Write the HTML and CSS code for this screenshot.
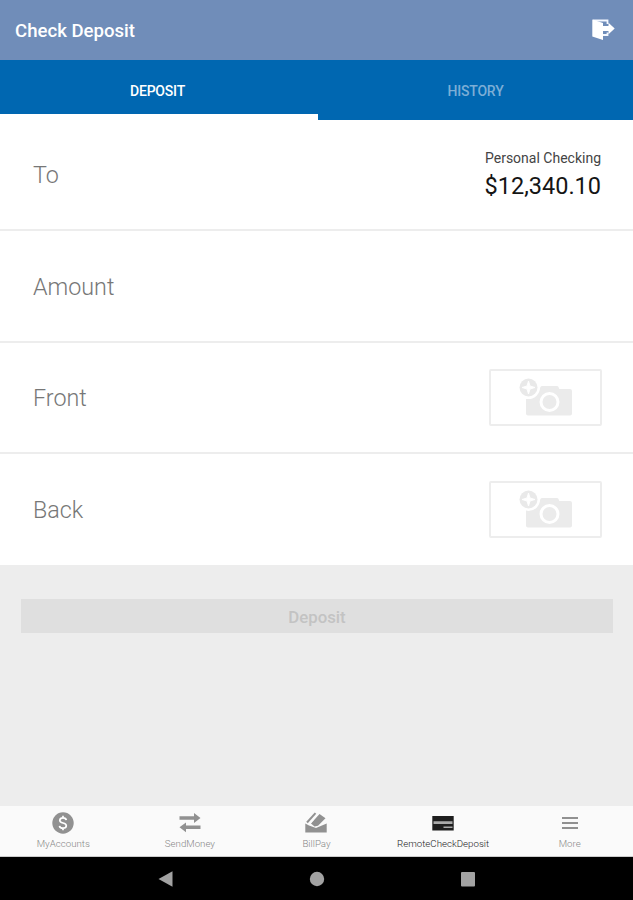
FILE: index.html
```html
<!DOCTYPE html>
<html lang="en">
<head>
<meta charset="utf-8">
<title>Check Deposit</title>
<link rel="stylesheet" href="styles.css">
</head>
<body>
<svg width="0" height="0" class="defs">
  <symbol id="camera" viewBox="0 0 54 40">
    <path fill="#ebebeb" d="M8 14h11l2.500-5q.5-1 1.500-1h15q1 0 1.500 1l.8 2h10.700q2 0 2 2v22.500q0 2-2 2H9q-2 0-2-2V14z"/>
    <circle cx="9.500" cy="9.500" r="11.500" fill="#fff"/>
    <circle cx="9.500" cy="9.500" r="9" fill="#e9e9e9"/>
    <path d="M9.500 3l1.500 5 5 1.500-5 1.500-1.500 5-1.500-5-5-1.500 5-1.500z" fill="#fff" stroke="#fff"/>
    <circle cx="30.500" cy="24" r="8.500" fill="#ebebeb" stroke="#fff" stroke-width="3"/>
  </symbol>
</svg>
<header class="appbar">
  <h1>Check Deposit</h1>
  <svg class="exit" width="24" height="24" viewBox="0 0 24 24">
    <path d="M1 2.500h14.500V6M15.500 14.500V17H10" fill="none" stroke="#f4f8ff" stroke-width="1.800"/>
    <path fill="#fff" d="M.3 1.600L11 5v17L.3 18.500z"/>
    <path fill="#fff" d="M11 8h5.500V4.800l6.200 5.700-6.200 5.700V13H11z"/>
  </svg>
</header>
<nav class="tabs">
  <div class="tab active">DEPOSIT</div>
  <div class="tab">HISTORY</div>
</nav>
<main>
  <section class="row">
    <span class="label">To</span>
    <div class="account"><span class="name">Personal Checking</span><span class="balance">$12,340.10</span></div>
  </section>
  <section class="row"><span class="label">Amount</span></section>
  <section class="row"><span class="label">Front</span><div class="photo"><svg width="54" height="40"><use href="#camera"/></svg></div></section>
  <section class="row"><span class="label">Back</span><div class="photo"><svg width="54" height="40"><use href="#camera"/></svg></div></section>
  <button class="submit" disabled>Deposit</button>
</main>
<nav class="bottom">
  <div class="item">
    <svg width="24" height="24" viewBox="0 0 24 24"><circle cx="12" cy="12" r="10.700" fill="#919191"/><path d="M15.300 9.200Q15 6.800 12 6.800T8.800 9.200Q8.800 11.200 12 12T15.300 14.800Q15.200 17.200 12 17.200T8.500 14.800M12 4.800v2M12 17v2.300" fill="none" stroke="#fff" stroke-width="1.700"/></svg>
    <span>MyAccounts</span>
  </div>
  <div class="item">
    <svg width="24" height="24" viewBox="0 0 24 24"><path fill="#919191" d="M1.500 5.200H16V2l6.500 5-6.500 5V8.800H1.500zM22.500 18H8v3.200L1.500 16.300 8 11.500v3h14.500z"/></svg>
    <span>SendMoney</span>
  </div>
  <div class="item">
    <svg width="24" height="24" viewBox="0 0 24 24"><path fill="#919191" d="M1.300 12.500L5 14.500 12 17l10.700-4.500v9H1.300z"/><path fill="#919191" d="M7 12.500L15.500 3l6 4.200-7.500 7.600-3.500.7z"/><path d="M3 11.500L11.500 2.200" stroke="#919191" stroke-width="2"/><path d="M5 14l9.500-11.500" stroke="#fafafa" stroke-width="1"/></svg>
    <span>BillPay</span>
  </div>
  <div class="item current">
    <svg width="24" height="24" viewBox="0 0 24 24"><path fill="#1e1e1e" d="M1.300 5h21.400v14.500H1.300z"/><path fill="#aaa" d="M2.500 10.300h19v2.700h-19zM12.500 15.500h9V17h-9z"/></svg>
    <span>RemoteCheckDeposit</span>
  </div>
  <div class="item">
    <svg width="24" height="24" viewBox="0 0 24 24"><path d="M4 7h16M4 12h16M4 17h16" stroke="#919191" stroke-width="2"/></svg>
    <span>More</span>
  </div>
</nav>
<footer class="system">
  <svg width="16" height="16"><path fill="#a2a2a2" d="M.5 8L14.500.2v15.600z"/></svg>
  <svg width="16" height="16"><circle cx="8" cy="8" r="7.200" fill="#a2a2a2"/></svg>
  <svg width="16" height="16"><rect x="1" y="1" width="14" height="14.500" rx="1" fill="#a2a2a2"/></svg>
</footer>
</body>
</html>
```

FILE: styles.css
```css
* { box-sizing: border-box; }
body {
  margin: 0;
  height: 900px;
  display: flex;
  flex-direction: column;
  overflow: hidden;
  background: #ededed;
  font-family: Roboto, sans-serif;
}
.defs { position: absolute; }
.appbar {
  height: 60px;
  padding: 0 17px 0 15px;
  display: flex;
  align-items: center;
  justify-content: space-between;
  background: #708db9;
}
h1 {
  margin: 1px 0 0;
  color: #fff;
  font-size: 18.600px;
  font-weight: 500;
}
.tabs { height: 60px; display: flex; background: #0067b1; }
.tab {
  flex: 1;
  padding-top: 7px;
  border-bottom: 6px solid transparent;
  display: flex;
  align-items: center;
  justify-content: center;
  color: #7caed6;
  font-size: 14px;
  letter-spacing: -0.200px;
  font-weight: 500;
}
.tab.active { color: #fff; border-color: #fff; padding-right: 3px; }
main { flex: 1; display: flex; flex-direction: column; }
.row {
  height: 112px;
  padding: 0 31px 0 33px;
  display: flex;
  align-items: center;
  justify-content: space-between;
  background: #fff;
  border-bottom: 2px solid #ededed;
}
.row:first-child { height: 111px; }
.row:nth-child(3) { height: 111px; }
.row:nth-child(4) { border-bottom-width: 1px; }
.label { padding-top: 1px; color: #777; font-size: 23.300px; font-weight: 300; }
.account {
  margin-right: 1px;
  display: flex;
  flex-direction: column;
  align-items: flex-end;
}
.name { color: #444; font-size: 14px; line-height: 22px; }
.balance { color: #151515; font-size: 23.500px; line-height: 34px; }
.photo {
  width: 113px;
  height: 57px;
  display: flex;
  align-items: center;
  justify-content: center;
  border: 2px solid #ededed;
  border-radius: 2px;
}
.submit {
  height: 34px;
  margin: 33px 20px 0 21px;
  padding: 1px 0 0;
  border: 0;
  background: #dfdfdf;
  color: #c3c3c3;
  font: 500 16.800px Roboto, sans-serif;
}
.bottom {
  height: 51px;
  display: flex;
  background: #fafafa;
  border-bottom: 1px solid #ccc;
}
.item {
  flex: 1;
  padding-top: 5px;
  display: flex;
  flex-direction: column;
  align-items: center;
  color: #888;
  font-size: 9.700px;
  font-weight: 300;
}
.item span { line-height: 17px; }
.item.current { color: #222; }
.system {
  height: 43px;
  display: flex;
  align-items: center;
  justify-content: center;
  gap: 135px;
  background: #000;
}
```
